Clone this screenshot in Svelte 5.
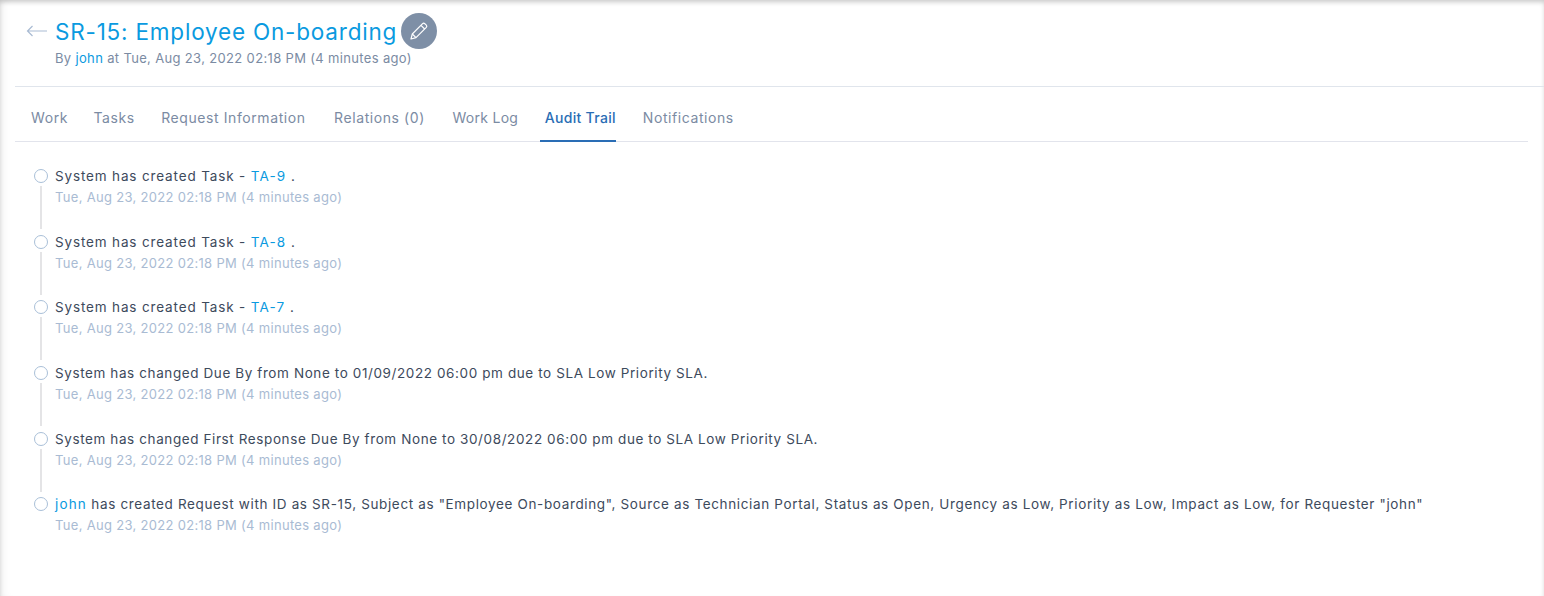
<script>
    const tabs = ['Work', 'Tasks', 'Request Information', 'Relations (0)', 'Work Log', 'Audit Trail', 'Notifications'];
    const active = 'Audit Trail';
    const when = 'Tue, Aug 23, 2022 02:18 PM (4 minutes ago)';

    const events = [
        { before: 'System has created Task - ', link: 'TA-9', after: ' .', short: true },
        { before: 'System has created Task - ', link: 'TA-8', after: ' .', short: true },
        { before: 'System has created Task - ', link: 'TA-7', after: ' .', short: true },
        { before: 'System has changed Due By from None to 01/09/2022 06:00 pm due to SLA Low Priority SLA.' },
        { before: 'System has changed First Response Due By from None to 30/08/2022 06:00 pm due to SLA Low Priority SLA.' },
        { link: 'john', after: ' has created Request with ID as SR-15, Subject as "Employee On-boarding", Source as Technician Portal, Status as Open, Urgency as Low, Priority as Low, Impact as Low, for Requester "john"', long: true }
    ];
</script>

<div class="page">
    <header class="head">
        <div class="title-row">
            <svg class="back" width="22" height="12" viewBox="0 0 22 12" fill="none" stroke="#a9bbd3" stroke-width="1.2">
                <path d="M21 6H1.5M6.5 1L1.5 6l5 5" />
            </svg>
            <h1>SR-15: Employee On-boarding</h1>
            <button class="edit" aria-label="Edit">
                <svg width="20" height="20" viewBox="0 0 20 20" fill="none" stroke="#fff" stroke-width="1.2" stroke-linejoin="round">
                    <path d="M2 18l1.3-5L13.6 2.7a1.6 1.6 0 0 1 2.2 0l1.5 1.5a1.6 1.6 0 0 1 0 2.2L7 16.7z" />
                    <path d="M12 4.3l3.7 3.7M3.3 13L7 16.7" />
                </svg>
            </button>
        </div>
        <p class="by">By <a href="#john">john</a> at {when}</p>
    </header>

    <nav class="tabs">
        {#each tabs as tab}
            <span class="tab" class:active={tab === active}>{tab}</span>
        {/each}
    </nav>

    <ul class="trail">
        {#each events as ev, i}
            <li class:last={i === events.length - 1}>
                <div class="line-text" class:short={ev.short} class:long={ev.long}>{#if ev.before}{ev.before}{/if}{#if ev.link}<a href="#item">{ev.link}</a>{/if}{#if ev.after}{ev.after}{/if}</div>
                <div class="time">{when}</div>
            </li>
        {/each}
    </ul>
</div>

<style>
    :global(body) {
        font-family: Inter, "Open Sans", sans-serif;
        background: #fff;
    }

    .page {
        height: 596px;
        box-sizing: border-box;
        padding-left: 15px;
        padding-right: 16px;
        overflow: hidden;
        box-shadow: inset 0 3px 5px -1px rgba(0, 0, 0, 0.22), inset 10px 0 8px -6px rgba(0, 0, 0, 0.05);
    }

    .head {
        height: 87px;
        box-sizing: border-box;
        margin-right: -16px;
        padding: 13px 0 0 11px;
        border-bottom: 1px solid #e0e5ec;
    }

    .title-row {
        display: flex;
        align-items: center;
        height: 36px;
    }

    .back {
        width: 22px;
        margin-right: 7px;
    }

    h1 {
        margin: 0;
        font-size: 22.5px;
        font-weight: 400;
        letter-spacing: 0.8px;
        color: #0a9ae0;
        white-space: nowrap;
    }

    .edit {
        width: 36px;
        height: 36px;
        margin-left: 4px;
        padding: 0;
        border: none;
        border-radius: 50%;
        background: #7e8fa6;
        display: flex;
        align-items: center;
        justify-content: center;
    }

    .by {
        margin: 0 0 0 29px;
        font-size: 13px;
        line-height: 18px;
        letter-spacing: 0.34px;
        color: #7b8ba3;
    }

    a {
        color: #0a9ae0;
        text-decoration: none;
    }

    .tabs {
        display: flex;
        height: 55px;
        box-sizing: border-box;
        padding-left: 11px;
        border-bottom: 1px solid #e2e4ec;
    }

    .tab {
        padding: 0 5px;
        margin-right: 16.5px;
        font-size: 14px;
        line-height: 62px;
        height: 54px;
        letter-spacing: 0.58px;
        color: #7b8ba3;
        white-space: nowrap;
    }

    .tab:nth-child(1) {
        margin-right: 15.5px;
    }

    .tab:nth-child(4) {
        margin-left: 2px;
    }

    .tab:nth-child(5) {
        margin-left: 1px;
        letter-spacing: 0.3px;
    }

    .tab.active {
        padding-right: 0;
        margin-right: 22px;
        color: #2a6db5;
        font-weight: 500;
        letter-spacing: 0.3px;
        border-bottom: 2px solid #2a6db5;
        height: 53px;
    }

    .trail {
        list-style: none;
        margin: 0;
        padding: 23px 0 0 40px;
    }

    li {
        position: relative;
        height: 65.7px;
    }

    li::before {
        content: '';
        position: absolute;
        left: -21px;
        top: 4px;
        width: 12px;
        height: 12px;
        border: 1px solid #a9bfd8;
        border-radius: 50%;
    }

    li:not(.last)::after {
        content: '';
        position: absolute;
        left: -15px;
        top: 21px;
        width: 2px;
        height: 43px;
        background: #e4e4e6;
    }

    .line-text {
        font-size: 13.5px;
        line-height: 22px;
        letter-spacing: 0.6px;
        color: #3d4a5c;
        white-space: nowrap;
    }

    .line-text.short {
        letter-spacing: 0.85px;
    }

    .line-text.long {
        letter-spacing: 0.64px;
    }

    .line-text a {
        letter-spacing: 1.15px;
    }

    .time {
        font-size: 13px;
        line-height: 21.5px;
        letter-spacing: 0.31px;
        color: #a9bbd3;
        white-space: nowrap;
    }
</style>
